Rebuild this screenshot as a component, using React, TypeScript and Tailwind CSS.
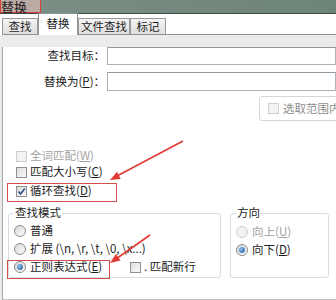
import React from "react";

const CheckBox = ({ checked = false, disabled = false }: { checked?: boolean; disabled?: boolean }) => (
  <span
    className={`relative flex h-[11px] w-[11px] shrink-0 items-center justify-center border ${
      disabled ? "border-[#cfcfcf] bg-[#f3f3f3]" : "border-[#8f8f8f] bg-gradient-to-br from-[#dcdcdc] to-[#fbfbfb]"
    }`}
  >
    {checked && (
      <svg width="9" height="9" viewBox="0 0 9 9">
        <path d="M1.5 4.5 L3.6 7 L7.8 1.5" fill="none" stroke="#2b4c86" strokeWidth="1.6" />
      </svg>
    )}
  </span>
);

const Radio = ({ checked = false, disabled = false }: { checked?: boolean; disabled?: boolean }) => (
  <span
    className={`flex h-[12px] w-[12px] shrink-0 items-center justify-center rounded-full border ${
      disabled ? "border-[#cdcdcd] bg-[#f2f2f2]" : "border-[#8a8a8a] bg-gradient-to-br from-[#d8d8d8] to-[#fdfdfd]"
    }`}
  >
    {checked && <span className="h-[6px] w-[6px] rounded-full bg-[radial-gradient(circle_at_35%_35%,#8fc3f2,#1d4f94)]" />}
  </span>
);

const Tab = ({ label, active = false, w }: { label: string; active?: boolean; w: string }) =>
  active ? (
    <div className={`${w} -mb-px flex h-[22px] items-center justify-center border border-b-0 border-[#8e9399] bg-white pb-[2px]`}>
      {label}
    </div>
  ) : (
    <div className={`${w} flex h-[16px] items-center justify-center border border-b-0 border-[#9a9a9a] bg-gradient-to-b from-[#f4f4f4] to-[#dedede]`}>
      {label}
    </div>
  );

export default function App() {
  return (
    <div className="relative h-[300px] w-[336px] overflow-hidden bg-[#ebebeb] font-['Noto_Sans_CJK_SC',sans-serif] text-[11.5px] leading-none text-[#1c1c1c]">
      {/* title bar */}
      <div className="flex h-[14px] overflow-hidden border-b border-[#3f4d47] bg-gradient-to-r from-[#7c8f86] to-[#6d8478]">
        <div className="flex h-[13px] w-[41px] items-end border border-t-0 border-[#d8403c] bg-[#bba9a4] text-[13px] leading-[10px]">
          替换
        </div>
      </div>

      {/* tabs */}
      <div className="flex h-[21px] items-end bg-white pl-[2px]">
        <div className="flex flex-1 items-end border-b border-[#8e9399]">
          <Tab label="查找" w="w-[36px]" />
          <Tab label="替换" active w="w-[40px]" />
          <Tab label="文件查找" w="w-[52px]" />
          <Tab label="标记" w="w-[36px]" />
        </div>
      </div>

      {/* panel */}
      <div className="ml-[2px] h-[254px] border-b-2 border-l border-b-[#c4c4c4] border-l-[#a7a7a7] bg-white">
        <div className="mt-[12px] flex h-[18px] items-center">
          <span className="w-[107px] text-right">查找目标：</span>
          <div className="ml-[2px] h-full w-[240px] border border-[#abb3ba] border-t-[#8f979e]" />
        </div>
        <div className="mt-[7px] flex h-[19px] items-center">
          <span className="w-[107px] text-right">
            替换为(<span className="underline">P</span>)：
          </span>
          <div className="ml-[2px] h-full w-[240px] border border-[#abb3ba] border-t-[#8f979e]" />
        </div>

        <div className="ml-[256px] mt-[5px] flex h-[25px] w-[100px] items-center gap-[4px] rounded-[3px] border border-[#d6d6d6] pl-[8px] text-[#8d8d8d]">
          <CheckBox disabled />
          <span>选取范围内</span>
        </div>

        <div className="mt-[27px] flex h-[16px] items-center gap-[3px] pl-[13px] text-[#a3a3a3]">
          <CheckBox disabled />
          <span>
            全词匹配(<span className="underline">W</span>)
          </span>
        </div>
        <div className="flex h-[16px] items-center gap-[3px] pl-[13px]">
          <CheckBox />
          <span>
            匹配大小写(<span className="underline">C</span>)
          </span>
        </div>
        <div className="mt-[2px] flex h-[18px] items-center gap-[3px] pl-[13px]">
          <CheckBox checked />
          <span>
            循环查找(<span className="underline">D</span>)
          </span>
        </div>

        <div className="mt-[13px] flex">
          <div className="relative ml-[5px] h-[65px] w-[213px] rounded-[3px] border border-[#d5dde2] pt-[8px]">
            <span className="absolute -top-[7px] left-[5px] bg-white px-[1px]">查找模式</span>
            <div className="flex h-[18px] items-center gap-[4px] pl-[5px]">
              <Radio />
              <span>普通</span>
            </div>
            <div className="flex h-[18px] items-center gap-[4px] pl-[5px]">
              <Radio />
              <span>扩展 (\n, \r, \t, \0, \x...)</span>
            </div>
            <div className="flex h-[18px] items-center gap-[4px] pl-[5px]">
              <Radio checked />
              <span className="w-[96px]">
                正则表达式(<span className="underline">E</span>)
              </span>
              <CheckBox />
              <span className="ml-[-1px]">. 匹配新行</span>
            </div>
          </div>

          <div className="relative ml-[9px] h-[65px] w-[99px] rounded-[3px] border border-[#d5dde2] pt-[9px]">
            <span className="absolute -top-[7px] left-[5px] bg-white px-[1px]">方向</span>
            <div className="flex h-[18px] items-center gap-[4px] pl-[5px] text-[#a3a3a3]">
              <Radio disabled />
              <span>
                向上(<span className="underline">U</span>)
              </span>
            </div>
            <div className="flex h-[18px] items-center gap-[4px] pl-[5px]">
              <Radio checked />
              <span>
                向下(<span className="underline">D</span>)
              </span>
            </div>
          </div>
        </div>
      </div>

      {/* annotations */}
      <div className="pointer-events-none absolute left-[7px] top-[183px] h-[19px] w-[110px] border border-[#d2504c]" />
      <div className="pointer-events-none absolute left-[7px] top-[260px] h-[19px] w-[103px] border border-[#d2504c]" />
      <svg className="pointer-events-none absolute left-0 top-0" width="336" height="300">
        <line x1="183" y1="141" x2="117" y2="176" stroke="#e23a33" strokeWidth="1.6" />
        <polygon points="110,180 120.7,178.9 117,171.8" fill="#e23a33" />
        <line x1="150" y1="235" x2="116" y2="259" stroke="#e23a33" strokeWidth="1.6" />
        <polygon points="110,263 120.5,260.6 115.9,254" fill="#e23a33" />
      </svg>
    </div>
  );
}
